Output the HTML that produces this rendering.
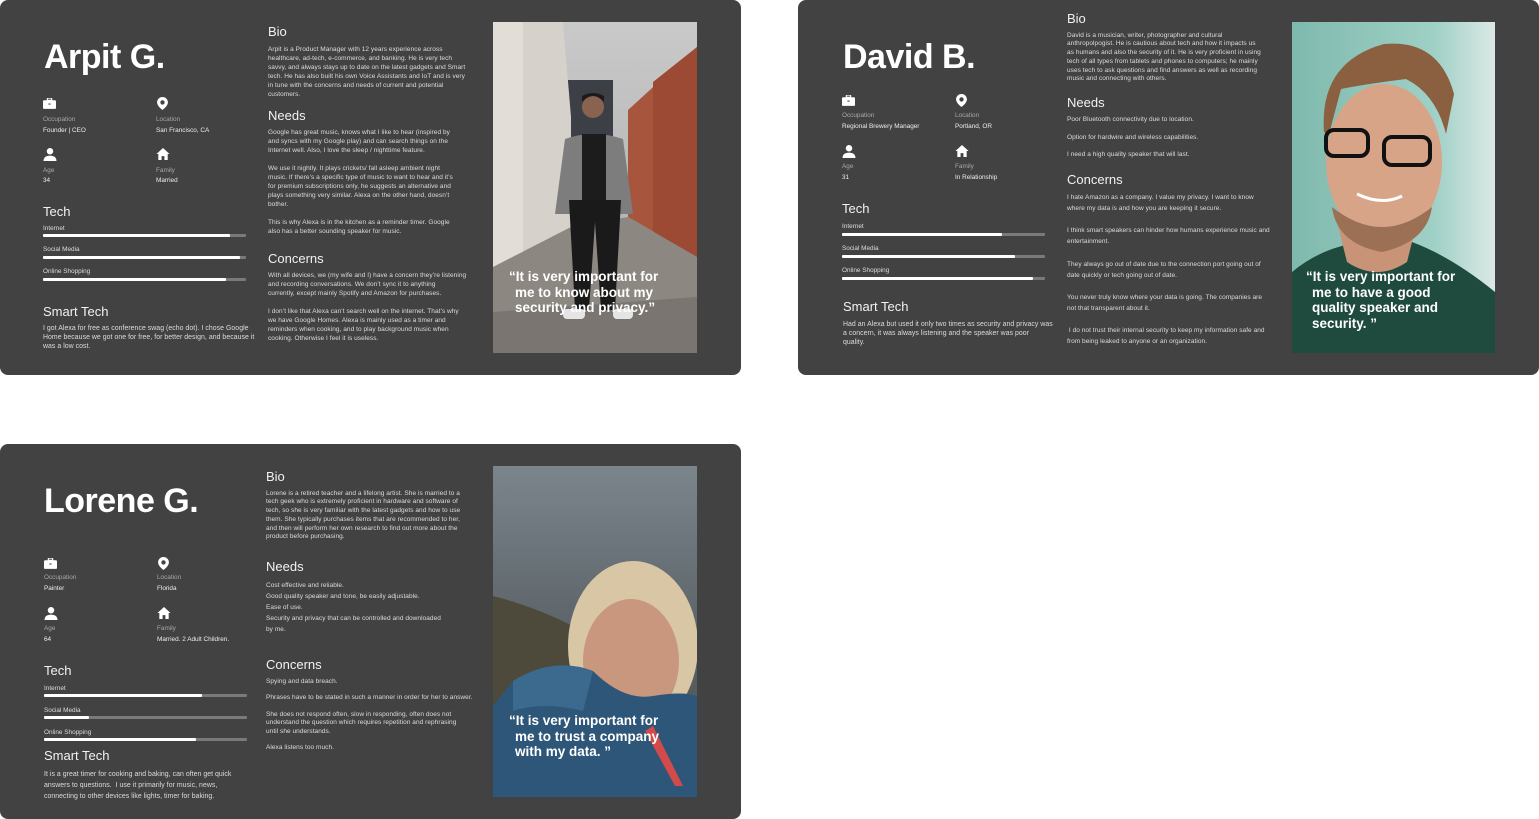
<!DOCTYPE html>
<html><head><meta charset="utf-8">
<style>
*{margin:0;padding:0;box-sizing:border-box}
body{width:1539px;height:819px;background:#fff;position:relative;overflow:hidden;font-family:"Liberation Sans",sans-serif;color:#fff}
.card{position:absolute;width:741px;height:375px;background:#424242;border-radius:8px;overflow:hidden}
.card div,.card svg{position:absolute}
.name{font-size:34px;line-height:40px;font-weight:bold;left:44px;top:37px;letter-spacing:-0.5px}
.h{font-size:13px;line-height:16px;color:#f2f2f2}
.lbl{font-size:6.4px;line-height:8px;color:#a8a8a8;white-space:nowrap}
.val{font-size:6.4px;line-height:8px;color:#eee;white-space:nowrap}
.t{font-size:6.5px;line-height:9px;color:#dcdcdc;white-space:nowrap;letter-spacing:0.05px}
.bl{font-size:6.4px;line-height:8px;color:#ddd;white-space:nowrap}
.bar{height:3px;width:203px;background:#7a7a7a;border-radius:1px}
.bar i{display:block;height:3px;background:#fff;border-radius:1px}
.photo{width:204px;height:331px;top:22px;left:493px;overflow:hidden}
.q{font-size:13.5px;line-height:15.5px;font-weight:bold;color:#fff;white-space:nowrap;left:16px;top:247px;text-indent:-6px;padding-left:6px}
</style></head><body>

<svg width="0" height="0" style="position:absolute">
<defs>
<symbol id="brief" viewBox="0 0 12 10"><rect x="4" y="0" width="4" height="2" fill="none" stroke="#fff" stroke-width="1"/><rect x="0" y="2" width="12" height="8" rx="1" fill="#fff"/><rect x="5" y="5" width="2" height="1" fill="#424242"/></symbol>
<symbol id="pin" viewBox="0 0 10 12"><path d="M5 0C2.2 0 0 2.2 0 5c0 3.5 5 7 5 7s5-3.5 5-7C10 2.2 7.8 0 5 0zm0 7a2 2 0 1 1 0-4 2 2 0 0 1 0 4z" fill="#fff"/></symbol>
<symbol id="user" viewBox="0 0 12 12"><circle cx="6" cy="3" r="3" fill="#fff"/><path d="M0 12c0-3.5 2.5-5 6-5s6 1.5 6 5z" fill="#fff"/></symbol>
<symbol id="home" viewBox="0 0 12 11"><path d="M6 0L0 5.5h1.7V11h3V7.5h2.6V11h3V5.5H12z" fill="#fff"/></symbol>
</defs></svg>

<!-- CARD 1 -->
<div class="card" style="left:0;top:0">
<div class="name">Arpit G.</div>
<svg style="left:43px;top:98px" width="13" height="11"><use href="#brief"/></svg>
<svg style="left:157px;top:97px" width="11" height="13"><use href="#pin"/></svg>
<div class="lbl" style="left:43px;top:116px">Occupation</div>
<div class="val" style="left:43px;top:127px">Founder | CEO</div>
<div class="lbl" style="left:156px;top:116px">Location</div>
<div class="val" style="left:156px;top:127px">San Francisco, CA</div>
<svg style="left:43px;top:148px" width="14" height="13"><use href="#user"/></svg>
<svg style="left:156px;top:148px" width="14" height="12"><use href="#home"/></svg>
<div class="lbl" style="left:43px;top:167px">Age</div>
<div class="val" style="left:43px;top:177px">34</div>
<div class="lbl" style="left:156px;top:167px">Family</div>
<div class="val" style="left:156px;top:177px">Married</div>
<div class="h" style="left:43px;top:204px">Tech</div>
<div class="bl" style="left:43px;top:225px">Internet</div>
<div class="bar" style="left:43px;top:234px"><i style="width:92%"></i></div>
<div class="bl" style="left:43px;top:246px">Social Media</div>
<div class="bar" style="left:43px;top:256px"><i style="width:97%"></i></div>
<div class="bl" style="left:43px;top:268px">Online Shopping</div>
<div class="bar" style="left:43px;top:278px"><i style="width:90%"></i></div>
<div class="h" style="left:43px;top:304px">Smart Tech</div>
<div class="t" style="left:43px;top:323.5px;font-size:6.9px">I got Alexa for free as conference swag (echo dot). I chose Google<br>Home because we got one for free, for better design, and because it<br>was a low cost.</div>

<div class="h" style="left:268px;top:24px">Bio</div>
<div class="t" style="left:268px;top:44.5px">Arpit is a Product Manager with 12 years experience across<br>healthcare, ad-tech, e-commerce, and banking. He is very tech<br>savvy, and always stays up to date on the latest gadgets and Smart<br>tech. He has also built his own Voice Assistants and IoT and is very<br>in tune with the concerns and needs of current and potential<br>customers.</div>
<div class="h" style="left:268px;top:108px">Needs</div>
<div class="t" style="left:268px;top:127.5px">Google has great music, knows what I like to hear (inspired by<br>and syncs with my Google play) and can search things on the<br>Internet well. Also, I love the sleep / nighttime feature.<br><br>We use it nightly. It plays crickets/ fall asleep ambient night<br>music. If there’s a specific type of music to want to hear and it’s<br>for premium subscriptions only, he suggests an alternative and<br>plays something very similar. Alexa on the other hand, doesn’t<br>bother.<br><br>This is why Alexa is in the kitchen as a reminder timer. Google<br>also has a better sounding speaker for music.</div>
<div class="h" style="left:268px;top:251px">Concerns</div>
<div class="t" style="left:268px;top:271px">With all devices, we (my wife and I) have a concern they’re listening<br>and recording conversations. We don’t sync it to anything<br>currently, except mainly Spotify and Amazon for purchases.<br><br>I don’t like that Alexa can’t search well on the internet. That’s why<br>we have Google Homes. Alexa is mainly used as a timer and<br>reminders when cooking, and to play background music when<br>cooking. Otherwise I feel it is useless.</div>

<div class="photo">
<svg width="204" height="331" style="left:0;top:0">
<defs><linearGradient id="sky1" x1="0" y1="0" x2="0" y2="1"><stop offset="0" stop-color="#c9c9c9"/><stop offset="1" stop-color="#a9a9a9"/></linearGradient></defs>
<rect width="204" height="331" fill="url(#sky1)"/>
<rect x="60" y="58" width="60" height="60" fill="#3c4046"/>
<polygon points="0,0 70,0 78,95 78,205 0,245" fill="#d6d1ca"/>
<polygon points="0,0 30,0 30,235 0,245" fill="#e2ddd6"/>
<polygon points="204,25 135,88 135,195 204,235" fill="#a7553c"/>
<polygon points="204,25 160,60 160,210 204,235" fill="#9c4a33"/>
<polygon points="0,245 78,205 135,195 204,235 204,331 0,331" fill="#8c8780"/>
<polygon points="0,290 204,275 204,331 0,331" fill="#7a7570"/>
<circle cx="100" cy="85" r="11" fill="#8a6350"/>
<path d="M89 80q11-12 22 0v-6q-11-6-22 0z" fill="#1e1a18"/>
<path d="M72 117q28-10 58 0l10 75h-78z" fill="#7d7d7d"/>
<rect x="89" y="112" width="24" height="70" fill="#1c1c1c"/>
<path d="M76 178h52l-6 110h-14l-6-88-6 88h-14z" fill="#1a1a1a"/>
<rect x="70" y="287" width="22" height="10" rx="4" fill="#e5e5e5"/>
<rect x="120" y="287" width="20" height="10" rx="4" fill="#e5e5e5"/>
</svg>
<div class="q">“It is very important for<br>me to know about my<br>security and privacy.”</div>
</div>
</div>

<!-- CARD 2 -->
<div class="card" style="left:798px;top:0">
<div class="name" style="left:45px">David B.</div>
<svg style="left:44px;top:95px" width="13" height="11"><use href="#brief"/></svg>
<svg style="left:158px;top:94px" width="11" height="13"><use href="#pin"/></svg>
<div class="lbl" style="left:44px;top:112px">Occupation</div>
<div class="val" style="left:44px;top:123px">Regional Brewery Manager</div>
<div class="lbl" style="left:157px;top:112px">Location</div>
<div class="val" style="left:157px;top:123px">Portland, OR</div>
<svg style="left:44px;top:145px" width="14" height="13"><use href="#user"/></svg>
<svg style="left:157px;top:145px" width="14" height="12"><use href="#home"/></svg>
<div class="lbl" style="left:44px;top:163px">Age</div>
<div class="val" style="left:44px;top:174px">31</div>
<div class="lbl" style="left:157px;top:163px">Family</div>
<div class="val" style="left:157px;top:174px">In Relationship</div>
<div class="h" style="left:44px;top:201px">Tech</div>
<div class="bl" style="left:44px;top:223px">Internet</div>
<div class="bar" style="left:44px;top:233px"><i style="width:79%"></i></div>
<div class="bl" style="left:44px;top:245px">Social Media</div>
<div class="bar" style="left:44px;top:255px"><i style="width:85%"></i></div>
<div class="bl" style="left:44px;top:267px">Online Shopping</div>
<div class="bar" style="left:44px;top:277px"><i style="width:94%"></i></div>
<div class="h" style="left:45px;top:299px">Smart Tech</div>
<div class="t" style="left:45px;top:319.5px;font-size:6.9px">Had an Alexa but used it only two times as security and privacy was<br>a concern, it was always listening and the speaker was poor<br>quality.</div>

<div class="h" style="left:269px;top:11px">Bio</div>
<div class="t" style="left:269px;top:31.5px;line-height:8.8px">David is a musician, writer, photographer and cultural<br>anthropolpogist. He is cautious about tech and how it impacts us<br>as humans and also the security of it. He is very proficient in using<br>tech of all types from tablets and phones to computers; he mainly<br>uses tech to ask questions and find answers as well as recording<br>music and connecting with others.</div>
<div class="h" style="left:269px;top:95px">Needs</div>
<div class="t" style="left:269px;top:116px;line-height:8px">Poor Bluetooth connectivity due to location.</div>
<div class="t" style="left:269px;top:134px;line-height:8px">Option for hardwire and wireless capabilities.</div>
<div class="t" style="left:269px;top:151px;line-height:8px">I need a high quality speaker that will last.</div>
<div class="h" style="left:269px;top:172px">Concerns</div>
<div class="t" style="left:269px;top:191.5px;line-height:11.5px">I hate Amazon as a company. I value my privacy. I want to know<br>where my data is and how you are keeping it secure.</div>
<div class="t" style="left:269px;top:224.5px;line-height:11.5px">I think smart speakers can hinder how humans experience music and<br>entertainment.</div>
<div class="t" style="left:269px;top:258.5px;line-height:11.5px">They always go out of date due to the connection port going out of<br>date quickly or tech going out of date.</div>
<div class="t" style="left:269px;top:291.5px;line-height:11.5px">You never truly know where your data is going. The companies are<br>not that transparent about it.</div>
<div class="t" style="left:269px;top:324.5px;line-height:11.5px">&nbsp;I do not trust their internal security to keep my information safe and<br>from being leaked to anyone or an organization.</div>

<div class="photo" style="left:494px;width:203px">
<svg width="203" height="331" style="left:0;top:0">
<defs><linearGradient id="bg2" x1="0" y1="0" x2="1" y2="0"><stop offset="0" stop-color="#7fb9ad"/><stop offset=".7" stop-color="#9fd0c6"/><stop offset="1" stop-color="#dbe9e6"/></linearGradient></defs>
<rect width="203" height="331" fill="url(#bg2)"/>
<path d="M0 250q30-25 70-30h50q40 15 83 50v61H0z" fill="#1f4a3e"/>
<path d="M45 200l10 40q30 20 60 0l10-40z" fill="#c99378"/>
<ellipse cx="92" cy="140" rx="58" ry="78" fill="#d7a488"/>
<path d="M32 110q-5-70 60-88q55-5 70 50l-8 40q-10-40-40-55q-40 5-65 10l-12 45z" fill="#8a6040"/>
<path d="M40 185q50 40 100 0q-5 35-50 45q-45-8-50-45z" fill="#9b7055"/>
<rect x="34" y="108" width="42" height="26" rx="8" fill="none" stroke="#111" stroke-width="4"/>
<rect x="92" y="115" width="46" height="28" rx="8" fill="none" stroke="#111" stroke-width="4"/>
<path d="M65 172q25 12 45 2" stroke="#fff" stroke-width="3" fill="none"/>
</svg>
<div class="q" style="left:14px;top:247px">“It is very important for<br>me to have a good<br>quality speaker and<br>security. ”</div>
</div>
</div>

<!-- CARD 3 -->
<div class="card" style="left:0;top:444px">
<div class="name">Lorene G.</div>
<svg style="left:44px;top:114px" width="13" height="11"><use href="#brief"/></svg>
<svg style="left:158px;top:113px" width="11" height="13"><use href="#pin"/></svg>
<div class="lbl" style="left:44px;top:130px">Occupation</div>
<div class="val" style="left:44px;top:141px">Painter</div>
<div class="lbl" style="left:157px;top:130px">Location</div>
<div class="val" style="left:157px;top:141px">Florida</div>
<svg style="left:44px;top:163px" width="14" height="13"><use href="#user"/></svg>
<svg style="left:157px;top:163px" width="14" height="12"><use href="#home"/></svg>
<div class="lbl" style="left:44px;top:181px">Age</div>
<div class="val" style="left:44px;top:192px">64</div>
<div class="lbl" style="left:157px;top:181px">Family</div>
<div class="val" style="left:157px;top:192px">Married. 2 Adult Children.</div>
<div class="h" style="left:44px;top:219px">Tech</div>
<div class="bl" style="left:44px;top:241px">Internet</div>
<div class="bar" style="left:44px;top:250px"><i style="width:78%"></i></div>
<div class="bl" style="left:44px;top:263px">Social Media</div>
<div class="bar" style="left:44px;top:272px"><i style="width:22%"></i></div>
<div class="bl" style="left:44px;top:285px">Online Shopping</div>
<div class="bar" style="left:44px;top:294px"><i style="width:75%"></i></div>
<div class="h" style="left:44px;top:304px">Smart Tech</div>
<div class="t" style="left:44px;top:325px;line-height:11px;font-size:6.9px">It is a great timer for cooking and baking, can often get quick<br>answers to questions.&nbsp; I use it primarily for music, news,<br>connecting to other devices like lights, timer for baking.</div>

<div class="h" style="left:266px;top:25px">Bio</div>
<div class="t" style="left:266px;top:45.5px;line-height:8.8px">Lorene is a retired teacher and a lifelong artist. She is married to a<br>tech geek who is extremely proficient in hardware and software of<br>tech, so she is very familiar with the latest gadgets and how to use<br>them. She typically purchases items that are recommended to her,<br>and then will perform her own research to find out more about the<br>product before purchasing.</div>
<div class="h" style="left:266px;top:115px">Needs</div>
<div class="t" style="left:266px;top:135.5px;line-height:11px">Cost effective and reliable.<br>Good quality speaker and tone, be easily adjustable.<br>Ease of use.<br>Security and privacy that can be controlled and downloaded<br>by me.</div>
<div class="h" style="left:266px;top:213px">Concerns</div>
<div class="t" style="left:266px;top:234px;line-height:8.5px">Spying and data breach.</div>
<div class="t" style="left:266px;top:250px;line-height:8.5px">Phrases have to be stated in such a manner in order for her to answer.</div>
<div class="t" style="left:266px;top:266.5px;line-height:8.5px">She does not respond often, slow in responding, often does not<br>understand the question which requires repetition and rephrasing<br>until she understands.</div>
<div class="t" style="left:266px;top:300px;line-height:8.5px">Alexa listens too much.</div>

<div class="photo">
<svg width="204" height="331" style="left:0;top:0">
<defs><linearGradient id="sky3" x1="0" y1="0" x2="0" y2="1"><stop offset="0" stop-color="#7b858c"/><stop offset=".45" stop-color="#5f676c"/><stop offset="1" stop-color="#4a4e4a"/></linearGradient></defs>
<rect width="204" height="331" fill="url(#sky3)"/>
<path d="M0 130q40 10 80 30v171H0z" fill="#4d4a3c"/>
<ellipse cx="140" cy="180" rx="65" ry="85" fill="#d9c6a4"/>
<ellipse cx="138" cy="195" rx="48" ry="62" fill="#c9977e"/>
<path d="M20 215q40-25 80-10q30 30 60 25q30-5 44 0v101H0V240z" fill="#2e5678"/>
<path d="M20 215q40-25 80-10l-10 40q-40-10-70 0z" fill="#3c6a8e"/>
<path d="M160 260l30 60h-8l-30-55z" fill="#d24a4a"/>
</svg>
<div class="q">“It is very important for<br>me to trust a company<br>with my data. ”</div>
</div>
</div>

</body></html>
